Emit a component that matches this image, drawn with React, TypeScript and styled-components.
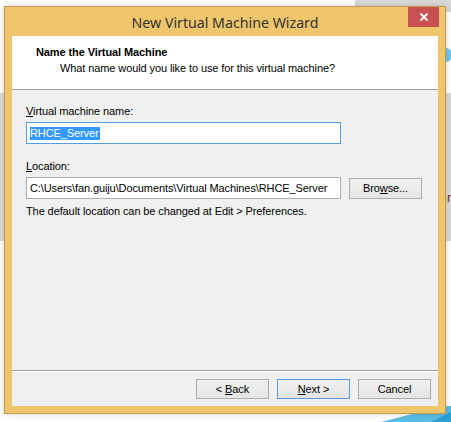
import React from 'react';
import styled, { createGlobalStyle } from 'styled-components';

/* global */
const GlobalStyle = createGlobalStyle`
  html, body {
    margin: 0;
    padding: 0;
    background: #ffffff;
    overflow: hidden;
  }
  * {
    box-sizing: border-box;
  }
`;

const uiFont = `"Liberation Sans", "DejaVu Sans", sans-serif`;

/* ===========
App
=========== */
export default function App() {
  return (
    <>
      <GlobalStyle />
      <Desktop>
        {/* what lies behind the dialog */}
        <BackLink>Import a new machine today</BackLink>
        <TopRightPanel />
        <GrayBand>
          <BandText>r</BandText>
        </GrayBand>
        <BlueDot />
        <CornerShape viewBox="0 0 70 16" preserveAspectRatio="none">
          <polygon points="0,16 62,0 70,0 70,16" fill="#5bbde3" />
          <polygon points="50,16 70,6 70,16" fill="#2a9fd2" />
        </CornerShape>

        <Window>
          <TitleBar>
            <Title>New Virtual Machine Wizard</Title>
            <CloseButton aria-label="Close">
              <svg width="10" height="10" viewBox="0 0 10 10">
                <path d="M1.5 1.5 L8.5 8.5 M8.5 1.5 L1.5 8.5" stroke="#ffffff" strokeWidth="1.8" />
              </svg>
            </CloseButton>
          </TitleBar>

          <Client>
            <Header>
              <HeaderTitle>Name the Virtual Machine</HeaderTitle>
              <HeaderSubtitle>What name would you like to use for this virtual machine?</HeaderSubtitle>
            </Header>

            <Body>
              <FieldLabel>
                <Key>V</Key>irtual machine name:
              </FieldLabel>
              <TextBox focused>
                <Selected>RHCE_Server</Selected>
              </TextBox>

              <FieldLabel spaced>
                <Key>L</Key>ocation:
              </FieldLabel>
              <Row>
                <TextBox>C:\Users\fan.guiju\Documents\Virtual Machines\RHCE_Server</TextBox>
                <Button small>
                  Bro<Key>w</Key>se...
                </Button>
              </Row>
              <Hint>The default location can be changed at Edit &gt; Preferences.</Hint>
            </Body>

            <Footer>
              <Button>
                &lt; <Key>B</Key>ack
              </Button>
              <Button primary>
                <Key>N</Key>ext &gt;
              </Button>
              <Button>Cancel</Button>
            </Footer>
          </Client>
        </Window>
      </Desktop>
    </>
  );
}

/* style: desktop behind */
const Desktop = styled.div`
  position: relative;
  width: 451px;
  height: 422px;
  overflow: hidden;
  background: #ffffff;
  padding: 6px 0 0 4px;
  font-family: ${uiFont};
`;

const BackLink = styled.div`
  position: absolute;
  top: -18px;
  left: 110px;
  font-family: "Open Sans", sans-serif;
  font-size: 16px;
  line-height: 16px;
  color: #1a7dc4;
  white-space: nowrap;
`;

const TopRightPanel = styled.div`
  position: absolute;
  top: 0;
  left: 355px;
  width: 96px;
  height: 12px;
  background: #d9d9d9;
`;

const GrayBand = styled.div`
  position: absolute;
  top: 93px;
  left: 0;
  width: 451px;
  height: 148px;
  background: #dadada;
`;

const BandText = styled.span`
  position: absolute;
  left: 447px;
  top: 97px;
  font-size: 13px;
  color: #7a2e10;
`;

const BlueDot = styled.div`
  position: absolute;
  top: 48px;
  left: 440px;
  width: 12px;
  height: 14px;
  border-radius: 50%;
  background: #6cc6ec;
`;

const CornerShape = styled.svg`
  position: absolute;
  right: 0;
  bottom: 0;
  width: 70px;
  height: 16px;
`;

/* style: window */
const Window = styled.div`
  position: relative;
  z-index: 1;
  width: 442px;
  height: 408px;
  display: flex;
  flex-direction: column;
  background: #efc66b;
  border: 1px solid #c39b48;
  box-shadow: 0 0 6px rgba(0, 0, 0, 0.18);
`;

const TitleBar = styled.div`
  position: relative;
  height: 29px;
  display: flex;
  align-items: center;
  justify-content: center;
`;

const Title = styled.div`
  font-family: "Noto Sans", "Open Sans", sans-serif;
  font-size: 14.2px;
  color: #333333;
  padding-top: 2px;
`;

const CloseButton = styled.button`
  position: absolute;
  top: 0;
  right: 6px;
  width: 31px;
  height: 20px;
  padding: 0;
  border: none;
  background: #c75050;
  display: flex;
  align-items: center;
  justify-content: center;
`;

const Client = styled.div`
  flex: 1;
  margin: 0 7px 7px;
  display: flex;
  flex-direction: column;
  background: #f0f0f0;
  font-size: 11px;
  letter-spacing: -0.1px;
  color: #000000;
`;

const Header = styled.div`
  height: 54px;
  background: #ffffff;
  border-bottom: 1px solid #a0a0a0;
  padding-top: 9px;
  line-height: 14px;
`;

const HeaderTitle = styled.div`
  margin-left: 24px;
  font-weight: bold;
`;

const HeaderSubtitle = styled.div`
  margin-left: 48px;
  margin-top: 2px;
`;

const Body = styled.div`
  flex: 1;
  padding: 15px 14px 0;
  display: flex;
  flex-direction: column;
  align-items: flex-start;
`;

const FieldLabel = styled.div<{ spaced?: boolean }>`
  line-height: 13px;
  margin-top: ${p => (p.spaced ? '16px' : '0')};
  margin-bottom: 4px;
`;

const Key = styled.span`
  text-decoration: underline;
`;

const TextBox = styled.div<{ focused?: boolean }>`
  width: 315px;
  height: 22px;
  padding: 3px 3px 0;
  line-height: 14px;
  background: #ffffff;
  border: 1px solid ${p => (p.focused ? '#569de5' : '#abadb3')};
  white-space: nowrap;
  overflow: hidden;
`;

const Selected = styled.span`
  display: inline-block;
  background: #3399ff;
  color: #ffffff;
  line-height: 13px;
  padding-right: 1px;
`;

const Row = styled.div`
  display: flex;
  align-items: center;
  gap: 8px;
`;

const Hint = styled.div`
  margin-top: 6px;
  line-height: 13px;
`;

const Footer = styled.div`
  height: 36px;
  border-top: 1px solid #a0a0a0;
  box-shadow: inset 0 1px 0 #ffffff;
  display: flex;
  justify-content: flex-end;
  align-items: flex-start;
  gap: 8px;
  padding: 8px 7px 0 0;
`;

const Button = styled.button<{ primary?: boolean; small?: boolean }>`
  width: 73px;
  height: ${p => (p.small ? '21px' : '20px')};
  padding: 0;
  font-family: ${uiFont};
  font-size: 11px;
  letter-spacing: -0.1px;
  color: #000000;
  background: linear-gradient(#f0f0f0, #e5e5e5);
  border: 1px solid ${p => (p.primary ? '#569de5' : '#acacac')};
`;
